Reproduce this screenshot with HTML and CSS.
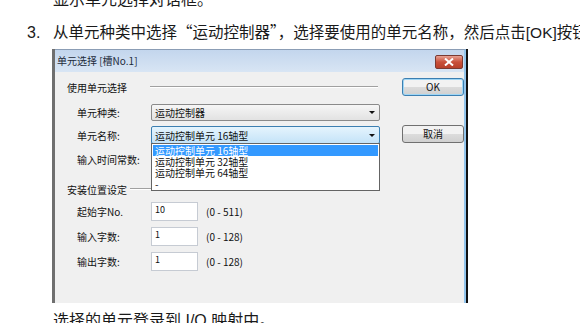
FILE: index.html
```html
<!DOCTYPE html>
<html lang="zh-CN">
<head>
  <meta charset="UTF-8">
  <meta name="viewport" content="width=device-width, initial-scale=1.0">
  <title>单元选择</title>
  <link rel="stylesheet" href="styles.css">
</head>
<body>
  <div class="page">
    <p class="para prev">显示单元选择对话框。</p>

    <div class="step">
      <span class="step-no">3.</span>
      <span class="step-text">从单元种类中选择<span class="cjk">“</span>运动控制器<span class="cjk">”</span>，选择要使用的单元名称，然后点击[OK]按钮。</span>
    </div>

    <div class="dialog">
      <div class="dialog-inner">
        <div class="titlebar">
          <span class="title">单元选择 [槽No.1]</span>
          <span class="close">
            <svg width="10" height="8" viewBox="0 0 10 8"><path d="M1 0.5 L9 7.5 M9 0.5 L1 7.5" stroke="#fff" stroke-width="2"/></svg>
          </span>
        </div>

        <div class="dlg-body">
          <div class="form">
            <div class="group-head">
              <span>使用单元选择</span>
              <i class="rule"></i>
            </div>

            <div class="row">
              <label>单元种类:</label>
              <div class="select">
                <span>运动控制器</span>
                <i class="arrow"></i>
              </div>
            </div>

            <div class="row">
              <label>单元名称:</label>
              <div class="select focus">
                <span>运动控制单元 16轴型</span>
                <i class="arrow"></i>
                <ul class="dropdown">
                  <li class="selected">运动控制单元 16轴型</li>
                  <li>运动控制单元 32轴型</li>
                  <li>运动控制单元 64轴型</li>
                  <li>-</li>
                </ul>
              </div>
            </div>

            <div class="row plain">
              <label>输入时间常数:</label>
            </div>

            <div class="group-head second">
              <span>安装位置设定</span>
              <i class="rule"></i>
            </div>

            <div class="row num">
              <label>起始字No.</label>
              <div class="input">10</div>
              <span class="range">(0 - 511)</span>
            </div>
            <div class="row num">
              <label>输入字数:</label>
              <div class="input">1</div>
              <span class="range">(0 - 128)</span>
            </div>
            <div class="row num">
              <label>输出字数:</label>
              <div class="input">1</div>
              <span class="range">(0 - 128)</span>
            </div>
          </div>

          <div class="buttons">
            <button class="btn default">OK</button>
            <button class="btn">取消</button>
          </div>
        </div>
      </div>
    </div>

    <p class="para next">选择的单元登录到 I/O 映射中。</p>
  </div>
</body>
</html>
```

FILE: styles.css
```css
body {
  margin: 0;
  background: #fff;
  font-family: "Liberation Sans", "Noto Sans CJK SC", sans-serif;
  color: #1a1a1a;
  overflow: hidden;
}

.page {
  width: 580px;
  height: 323px;
  overflow: hidden;
}

.para {
  margin: 0 0 0 53px;
  font-size: 16px;
  line-height: 20px;
  white-space: nowrap;
}

.prev {
  margin-top: -10px;
}

.step {
  display: flex;
  height: 20px;
  margin-top: 13px;
  font-size: 15.5px;
  line-height: 20px;
  white-space: nowrap;
}

.step-no {
  flex: none;
  width: 26px;
  margin-left: 27px;
  font-size: 16px;
}

.cjk {
  font-family: "Noto Sans CJK SC", sans-serif;
  line-height: 1;
}

/* dialog */
.dialog {
  width: 411px;
  height: 254px;
  margin: 6px 0 0 52px;
  border-left: 3px solid #6f6f6f;
  border-right: 2px solid #111;
  font-family: "Noto Sans CJK SC", "Liberation Sans", sans-serif;
  font-size: 10px;
  color: #111;
}

.dialog-inner {
  height: 100%;
  border-top: 1px solid #8b9db5;
  border-right: 2px solid #93c5ec;
  background: #f0f0f0;
  box-sizing: border-box;
}

.titlebar {
  display: flex;
  justify-content: space-between;
  align-items: center;
  height: 22px;
  padding: 0 1px 0 2px;
  background: linear-gradient(#c3d6ed, #d8e5f4);
}

.title {
  font-size: 10px;
  line-height: 12px;
  color: #1c2a3a;
}

.close {
  display: flex;
  align-items: center;
  justify-content: center;
  width: 26px;
  height: 12px;
  margin-top: 2px;
  border: 1px solid #7a3a32;
  border-radius: 2px;
  background: linear-gradient(#e8a193, #c9503a 50%, #b8402a);
}

.dlg-body {
  display: flex;
  padding: 6px 0 0 12px;
}

.form {
  width: 326px;
}

.group-head {
  display: flex;
  align-items: center;
  gap: 12px;
  height: 14px;
  margin-top: 2px;
}

.group-head span {
  width: 71px;
}

.group-head .rule {
  width: 228px;
  border-top: 1px solid #a0a0a0;
  border-bottom: 1px solid #fff;
}

.group-head.second {
  margin-top: 16px;
  gap: 2px;
}

.group-head.second span {
  width: 61px;
}

.group-head.second .rule {
  width: 248px;
}

.row {
  display: flex;
  align-items: center;
  margin-left: 10px;
  margin-top: 10px;
}

.row + .row {
  margin-top: 5px;
}

.row label {
  width: 74px;
  flex: none;
}

.row.plain {
  height: 14px;
  margin-top: 8px;
}

.select {
  position: relative;
  display: flex;
  align-items: center;
  justify-content: space-between;
  width: 229px;
  height: 17px;
  padding: 0 4px 0 3px;
  box-sizing: border-box;
  border: 1px solid #8a8a8a;
  border-radius: 2px;
  background: linear-gradient(#f6f6f6, #e2e2e2);
}

.select.focus {
  height: 18px;
  border-color: #3c7fb1;
  background: linear-gradient(#e5f4fd, #c4e3f8);
}

.arrow {
  width: 0;
  height: 0;
  border-left: 3px solid transparent;
  border-right: 3px solid transparent;
  border-top: 3px solid #111;
}

.dropdown {
  position: absolute;
  top: 100%;
  left: -1px;
  right: -1px;
  margin: 0;
  padding: 1px;
  list-style: none;
  background: #fff;
  border: 1px solid #646464;
}

.dropdown li {
  height: 11px;
  line-height: 11px;
  padding-left: 2px;
}

.dropdown li.selected {
  background: #3399ff;
  color: #fff;
}

.row.num {
  margin-top: 6px;
}

.group-head.second + .row.num {
  margin-top: 6px;
}

.input {
  width: 47px;
  height: 19px;
  padding: 1px 0 0 3px;
  box-sizing: border-box;
  background: #fff;
  border: 1px solid #c6cbd3;
  font-size: 9px;
  line-height: 12px;
}

.range {
  margin-left: 8px;
}

.buttons {
  display: flex;
  flex-direction: column;
  gap: 29px;
  margin-left: 15px;
}

.btn {
  width: 62px;
  height: 18px;
  padding: 0;
  font-family: "Noto Sans CJK SC", "Liberation Sans", sans-serif;
  font-size: 10px;
  line-height: 14px;
  color: #111;
  border: 1px solid #707070;
  border-radius: 3px;
  background: linear-gradient(#f2f2f2 50%, #dcdcdc 50%, #d0d0d0);
}

.btn.default {
  border-color: #3c7fb1;
  box-shadow: inset 0 0 0 1px #9fd6f5;
}

.next {
  margin-top: 8px;
}
```
